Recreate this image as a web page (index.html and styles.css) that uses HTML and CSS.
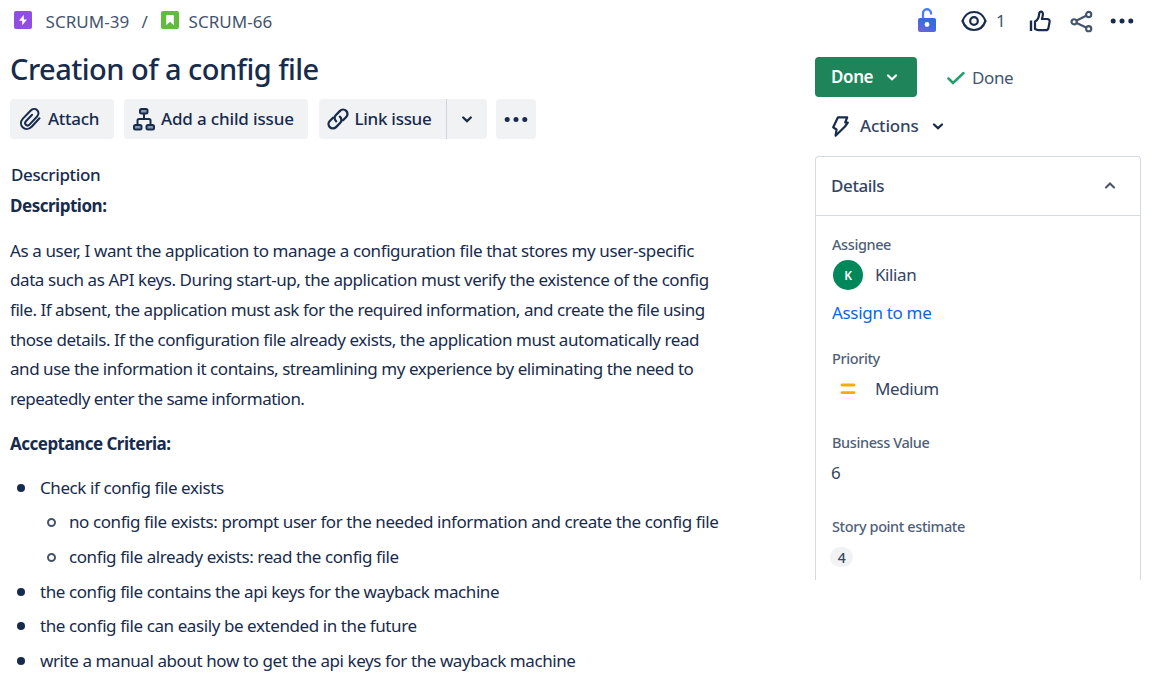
FILE: index.html
```html
<!DOCTYPE html>
<html lang="en">
<head>
<meta charset="utf-8">
<title>SCRUM-66 Creation of a config file</title>
<link rel="stylesheet" href="styles.css">
</head>
<body>
<div class="page">
  <main class="issue">
    <nav class="crumbs">
      <svg class="type-icon" width="18" height="18" viewBox="0 0 18 18"><rect width="18" height="18" rx="2" fill="#904ee2"/><path d="M9.800 3.800 5 9.800h3.200v4.400L13 8.400H9.800z" fill="#fff"/></svg>
      <span class="key key-parent">SCRUM-39</span>
      <span class="slash">/</span>
      <svg class="type-icon" width="18" height="18" viewBox="0 0 18 18"><rect width="18" height="18" rx="2" fill="#63ba3c"/><path d="M5.200 4.700q0-.7.7-.7h6.200q.7 0 .7.7v9.600L9 10.700l-3.800 3.600z" fill="#fff"/></svg>
      <span class="key key-issue">SCRUM-66</span>
    </nav>
    <h1 class="title">Creation of a config file</h1>
    <div class="toolbar">
      <button class="btn attach"><svg width="24" height="24" viewBox="0 0 24 24" fill="none" stroke="#172b4d" stroke-width="2" stroke-linecap="round"><path d="M21.500 11.300l-7.600 8.200c-2.600 2.700-6.400 3.300-9 .9s-2.500-6 0-8.800l7.600-7.900c2-2.100 4.900-2.200 6.700-.5s1.700 4.400-.3 6.500l-7.200 7.700c-1.300 1.300-2.900 1.400-3.900.4s-.9-2.500.3-3.800l6-6.300"/></svg><span>Attach</span></button>
      <button class="btn child"><svg width="24" height="24" viewBox="0 0 24 24" fill="none" stroke="#172b4d" stroke-width="2"><rect x="8" y="2" width="7.500" height="4.500" rx="1.500" fill="#8c98aa"/><rect x="2" y="18" width="7.500" height="4.500" rx="1.500" fill="#8c98aa"/><rect x="14.500" y="18" width="7.500" height="4.500" rx="1.500" fill="#8c98aa"/><path d="M12 6.500V12M5.500 18v-4.500Q5.500 12 7 12h10q1.500 0 1.500 1.500V18"/></svg><span>Add a child issue</span></button>
      <div class="split">
        <button class="btn link"><svg width="24" height="24" viewBox="0 0 24 24" fill="none" stroke="#172b4d" stroke-width="2.300" stroke-linecap="round"><path d="M10.200 14.300c-2-1.700-2.100-4.500-.5-6.100l4.300-4.300c1.700-1.700 4.500-1.700 6.200 0s1.700 4.400 0 6.100l-3.200 3.200"/><path d="M13.800 9.700c2 1.700 2.100 4.500.5 6.100L10 20.100c-1.700 1.700-4.500 1.700-6.200 0s-1.700-4.400 0-6.100L7 10.800"/></svg><span>Link issue</span></button>
        <button class="btn drop"><svg width="12" height="8" viewBox="0 0 12 8" fill="none" stroke="#172b4d" stroke-width="2.300" stroke-linecap="round"><path d="M2.200 2.500 6 6.100l3.800-3.600"/></svg></button>
      </div>
      <button class="btn more"><svg width="24" height="6" viewBox="0 0 24 6" fill="#172b4d"><circle cx="3.200" cy="3.500" r="2.500"/><circle cx="12" cy="3.500" r="2.500"/><circle cx="20.800" cy="3.500" r="2.500"/></svg></button>
    </div>
    <h2 class="label">Description</h2>
    <h3 class="heading">Description:</h3>
    <p class="body">
      <span class="l1">As a user, I want the application to manage a configuration file that stores my user-specific</span>
      <span class="l2">data such as API keys. During start-up, the application must verify the existence of the config</span>
      <span class="l3">file. If absent, the application must ask for the required information, and create the file using</span>
      <span class="l4">those details. If the configuration file already exists, the application must automatically read</span>
      <span class="l5">and use the information it contains, streamlining my experience by eliminating the need to</span>
      <span class="l6">repeatedly enter the same information.</span>
    </p>
    <h3 class="heading criteria">Acceptance Criteria:</h3>
    <ul class="list">
      <li><span>Check if config file exists</span>
        <ul class="sublist">
          <li><span>no config file exists: prompt user for the needed information and create the config file</span></li>
          <li><span>config file already exists: read the config file</span></li>
        </ul>
      </li>
      <li><span>the config file contains the api keys for the wayback machine</span></li>
      <li><span>the config file can easily be extended in the future</span></li>
      <li><span>write a manual about how to get the api keys for the wayback machine</span></li>
    </ul>
  </main>
  <aside class="side">
    <div class="actions">
      <svg class="lock" width="20" height="26" viewBox="0 0 20 26"><defs><linearGradient id="lockFill" x1="0" y1="1" x2=".6" y2="0"><stop offset="0" stop-color="#7b62d3"/><stop offset=".6" stop-color="#3f69e2"/><stop offset="1" stop-color="#2f6be4"/></linearGradient></defs><path d="M6 12V6.500a4 4 0 0 1 8-.5v1.500" fill="none" stroke="#4c7ff0" stroke-width="2.300"/><rect x="1" y="11" width="18" height="14" rx="2" fill="url(#lockFill)"/><circle cx="10" cy="17.500" r="2.400" fill="#fff"/></svg>
      <svg class="eye" width="26" height="22" viewBox="0 0 26 22" fill="none" stroke="#172b4d" stroke-width="2.200"><path d="M1.500 11C3.500 5.500 8 2 13 2s9.500 3.500 11.500 9C22.500 16.500 18 20 13 20S3.500 16.500 1.500 11z"/><circle cx="13" cy="11" r="3.800"/></svg>
      <span class="watchers">1</span>
      <svg class="like" width="22" height="22" viewBox="0 0 22 22" fill="none" stroke="#172b4d" stroke-width="2.200" stroke-linejoin="round"><path d="M2 10.500V21" stroke-width="2.400"/><path d="M6 11.500C9 10 10 7 10.200 3.600 10.300 1 13.700 1 13.900 4c.1 2-.5 3.500-1 5h5.200c1.700 0 2.800 1.200 2.500 2.700l-1.100 6c-.3 1.600-1.300 2.500-2.800 2.500H9.800c-1.400 0-2.200-.4-3.800-1.200z"/></svg>
      <svg class="share" width="23" height="23" viewBox="0 0 24 24" fill="none" stroke="#44546f" stroke-width="2.200"><circle cx="4.300" cy="12.300" r="2.700"/><circle cx="19.500" cy="4.700" r="2.700"/><circle cx="19.500" cy="19.500" r="2.700"/><path d="M7 11l9.800-5M7 13.600l9.800 4.700"/></svg>
      <svg class="dots" width="24" height="6" viewBox="0 0 24 6" fill="#172b4d"><circle cx="3.200" cy="3" r="2.500"/><circle cx="12" cy="3" r="2.500"/><circle cx="20.800" cy="3" r="2.500"/></svg>
    </div>
    <div class="status">
      <button class="done"><span>Done</span><svg width="12" height="8" viewBox="0 0 12 8" fill="none" stroke="#fff" stroke-width="2.200" stroke-linecap="round"><path d="M2 2.500l4 3.700 4-3.700"/></svg></button>
      <div class="resolution"><svg width="18" height="14" viewBox="0 0 18 14" fill="none" stroke="#22a06b" stroke-width="2.500" stroke-linecap="round"><path d="M1.500 7.500l4.500 4.500L16.500 2"/></svg><span>Done</span></div>
    </div>
    <div class="automation">
      <svg width="18" height="23" viewBox="0 0 18 23" fill="none" stroke="#172b4d" stroke-width="2.200" stroke-linejoin="round"><path d="M7 2.300h9.200l-2 5.200h2.600L14 11.500 4.600 20.700l.9-6.200-3.300-2.200z"/></svg>
      <span>Actions</span>
      <svg width="12" height="8" viewBox="0 0 12 8" fill="none" stroke="#172b4d" stroke-width="2.300" stroke-linecap="round"><path d="M2 2.500l4 3.700 4-3.700"/></svg>
    </div>
    <section class="panel">
      <header class="panel-head"><span>Details</span><svg width="12" height="8" viewBox="0 0 12 8" fill="none" stroke="#44546f" stroke-width="2" stroke-linecap="round"><path d="M2 5.500l4-4 4 4"/></svg></header>
      <div class="fields">
        <div class="name assignee">Assignee</div>
        <div class="value person"><span class="avatar">K</span><span class="text">Kilian</span></div>
        <a class="assign">Assign to me</a>
        <div class="name priority">Priority</div>
        <div class="value medium"><svg width="16" height="12" viewBox="0 0 16 12" stroke="#ffab00" stroke-width="2.800" stroke-linecap="round"><path d="M2 2h12M2 9.700h12"/></svg><span class="text">Medium</span></div>
        <div class="name business">Business Value</div>
        <div class="value"><span class="text points">6</span></div>
        <div class="name story">Story point estimate</div>
        <div class="value"><span class="badge">4</span></div>
      </div>
    </section>
  </aside>
</div>
</body>
</html>
```
FILE: styles.css
```css
* { box-sizing: border-box; }
body {
  margin: 0;
  background: #fff;
  color: #172b4d;
  font-family: "Noto Sans", "Open Sans", sans-serif;
  font-size: 17px;
}
h1, h2, h3, p, ul { margin: 0; padding: 0; font-weight: 400; }
svg { display: block; flex: none; }
button { border: 0; margin: 0; padding: 0; font: inherit; color: inherit; letter-spacing: inherit; }
.page { display: flex; width: 1159px; height: 680px; overflow: hidden; }
.issue { width: 815px; padding-left: 10px; white-space: nowrap; letter-spacing: -0.42px; }
.crumbs { display: flex; align-items: center; height: 42px; padding-left: 4px; color: #44546f; }
.type-icon { margin-top: -2px; }
.key { font-size: 17px; letter-spacing: 0.05px; }
.key-parent { width: 84px; margin-left: 13.500px; }
.slash { width: 6px; margin: 0 13px 0 12px; }
.key-issue { margin-left: 10px; }
.title { height: 46px; margin-top: 4px; font-size: 29px; line-height: 46px; font-weight: 500; letter-spacing: -0.53px; }
.toolbar { display: flex; gap: 9.5px; height: 40px; margin-top: 7px; font-weight: 500; }
.btn { display: flex; align-items: center; height: 40px; border-radius: 4px; background: #f1f2f4; }
.btn > span { margin-top: -1px; }
.attach { width: 104px; padding-left: 8px; gap: 6px; letter-spacing: -0.3px; }
.child { width: 184px; padding-left: 8px; gap: 5.500px; letter-spacing: -0.16px; }
.split { display: flex; width: 168px; margin-left: 1.500px; letter-spacing: -0.28px; }
.link { width: 127px; padding-left: 7px; gap: 5px; border-radius: 4px 0 0 4px; }
.drop { width: 41px; justify-content: center; border-left: 1px solid #d0d4db; border-radius: 0 4px 4px 0; }
.more { width: 40px; margin-left: -0.5px; justify-content: center; }
.label { margin: 21px 0 0 1px; font-size: 17px; line-height: 30px; font-weight: 500; letter-spacing: -0.36px; }
.heading { position: relative; top: 0.6px; font-size: 17px; line-height: 30px; font-weight: 700; letter-spacing: -0.48px; }
.body { margin-top: 15.500px; line-height: 29.7px; }
.body span { display: block; }
.body .l1 { letter-spacing: -0.395px; }
.body .l2 { letter-spacing: -0.425px; }
.body .l3 { letter-spacing: -0.458px; }
.body .l4 { letter-spacing: -0.448px; }
.body .l5 { letter-spacing: -0.455px; }
.body .l6 { letter-spacing: -0.525px; }
.criteria { margin-top: 14.500px; letter-spacing: -0.52px; }
.list { margin-top: 12.500px; line-height: 34.6px; list-style: none; letter-spacing: -0.415px; }
.list li { display: grid; grid-template-columns: 30px auto; align-items: center; }
.list li::before { content: ""; width: 8px; height: 8px; margin-left: 7px; border-radius: 50%; background: #172b4d; }
.sublist { grid-column: 2; margin-left: -1px; list-style: none; }
.list .sublist li::before { box-sizing: border-box; width: 9px; height: 9px; margin-left: 8px; background: none; border: 2px solid #44546f; }
.side { width: 326px; white-space: nowrap; letter-spacing: -0.4px; }
.actions { display: flex; align-items: center; height: 42px; padding-left: 102px; color: #44546f; }
.watchers { width: 10px; margin: -2px 23px 0 9px; }
.lock { margin-top: -3px; }
.eye { margin-left: 24px; }
.like { margin-right: 19px; }
.dots { margin-left: 17px; }
.status { display: flex; align-items: center; height: 40px; margin-top: 15px; }
.done { display: flex; align-items: center; width: 102px; height: 40px; padding-left: 16px; gap: 13px; border-radius: 4px; background: #1f845a; color: #fff; font-weight: 600; }
.done span { margin-top: -2px; }
.resolution { display: flex; align-items: center; gap: 7px; margin: 2px 0 0 30px; color: #44546f; }
.resolution span { margin-top: -2px; }
.automation { display: flex; align-items: center; height: 40px; margin-top: 9px; padding-left: 16px; }
.automation span { width: 60px; margin: -2px 12px 0 11px; color: #344563; font-weight: 500; letter-spacing: -0.2px; }
.panel { height: 424px; margin-top: 10px; border: 1px solid #d5d9e2; border-bottom: 0; border-radius: 4px 4px 0 0; }
.panel-head { display: flex; align-items: center; justify-content: space-between; height: 59px; padding: 0 24px 0 15px; border-bottom: 1px solid #d5d9e2; color: #344563; font-weight: 500; }
.panel-head span { margin-top: -1px; }
.fields { padding: 18px 0 0 16px; color: #344563; }
.name { height: 20px; font-size: 14.500px; line-height: 20px; font-weight: 500; color: #505f79; }
.value { display: flex; align-items: center; height: 30px; margin-top: 6px; }
.value .text { margin-top: -2px; }
.value .points { margin-left: -1px; }
.person { gap: 12px; }
.avatar { display: grid; place-items: center; width: 30px; height: 30px; margin-left: 1px; border-radius: 50%; background: #00875a; color: #fff; font-size: 12px; font-weight: 600; }
.assign { display: block; height: 30px; margin-top: 8px; line-height: 30px; color: #0c66e4; letter-spacing: -0.32px; }
.priority { margin-top: 20px; }
.medium { padding-left: 8px; gap: 19px; }
.business, .story { margin-top: 28px; }
.badge { display: grid; place-items: center; width: 23px; height: 20px; margin-left: -2px; border-radius: 10px; background: #f1f2f4; font-size: 14px; font-weight: 500; }
```
